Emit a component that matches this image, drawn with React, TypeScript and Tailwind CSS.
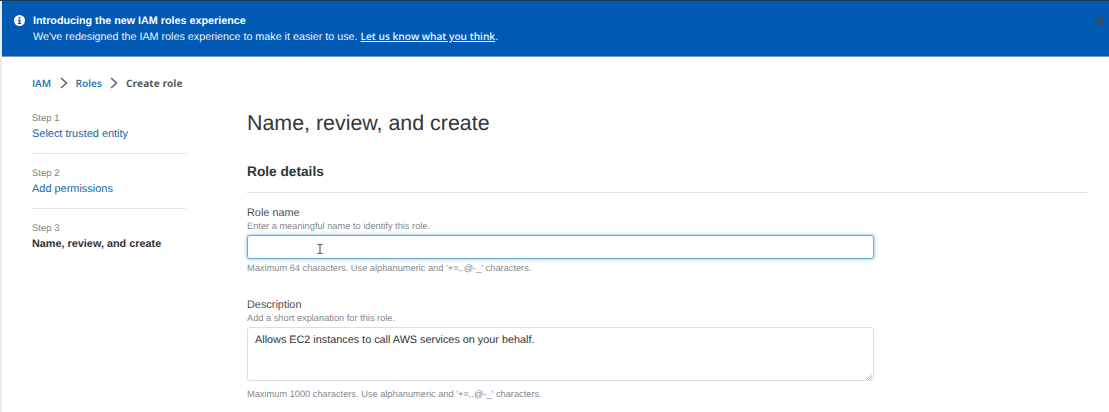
import type { ReactNode } from "react";

function Chevron() {
  return (
    <svg className="h-[12px] w-[8px] shrink-0" viewBox="0 0 8 12" fill="none" stroke="#666b6f" strokeWidth="1.7">
      <path d="M1 1l5.4 5L1 11" />
    </svg>
  );
}

function Step({ n, children, current = false }: { n: number; children: ReactNode; current?: boolean }) {
  return (
    <li className={current ? "h-[55px]" : "mb-[13px] h-[42px] border-b border-[#e6e8e8]"}>
      <div className="h-[13px] text-[9.5px] leading-[14px] text-[#7c8284]">Step {n}</div>
      {current ? (
        <div className="mt-px text-[10.85px] leading-[17px] font-bold text-[#2f3337]">{children}</div>
      ) : (
        <a className="mt-px block text-[10.95px] leading-[17px] text-[#1866a8]">{children}</a>
      )}
    </li>
  );
}

function Label({ title, hint }: { title: string; hint: string }) {
  return (
    <>
      <div className="text-[10.9px] leading-[15px] text-[#4a4e52]">{title}</div>
      <div className="-mt-px text-[9.26px] leading-[12px] text-[#858a8c]">{hint}</div>
    </>
  );
}

export default function App() {
  return (
    <div className="flex h-[412px] w-[1109px] flex-col overflow-hidden bg-white font-['Liberation_Sans',Arial,sans-serif] whitespace-nowrap [text-rendering:geometricPrecision]">
      <div className="h-px shrink-0 bg-[#1d3a5a]" />
      <div className="flex min-h-0 flex-1">
        <div className="w-[2px] shrink-0 bg-[#ececec]" />
        <div className="min-w-0 flex-1">
          <header className="flex h-[56px] border-b border-[#6f9dce] bg-[#0059b3] pt-[12px] pl-[12px] text-white">
            <svg className="mt-[2px] h-[11px] w-[11px]" viewBox="0 0 11 11">
              <circle cx="5.5" cy="5.5" r="5.5" fill="#fff" />
              <path d="M4.7 2h1.7v1.5H4.7zM4 4.4h2.4v3.5h.8V9H3.9V7.9h.8V5.5H4z" fill="#0059b3" />
            </svg>
            <div className="ml-[8px] flex-1 text-[10.76px] leading-[16px]">
              <div className="font-bold">Introducing the new IAM roles experience</div>
              <div className="-mt-px text-[#eaf3fb]">
                We've redesigned the IAM roles experience to make it easier to use.{" "}
                <a className="font-['Open_Sans','Noto_Sans',sans-serif] text-[10.15px] font-semibold underline">Let us know what you think</a>.
              </div>
            </div>
            <svg className="mt-[3px] mr-[5px] h-[9px] w-[9px]" viewBox="0 0 9 9" stroke="#34495c" strokeWidth="2.6">
              <path d="M1 1l7 7M8 1l-7 7" />
            </svg>
          </header>

          <nav className="mt-[18px] ml-[30px] flex h-[16px] items-center font-['Open_Sans','Noto_Sans',sans-serif] text-[10.2px] leading-[16px] font-semibold text-[#1c72ad]">
            <a className="w-[27.5px]">IAM</a>
            <Chevron />
            <a className="ml-[8px] w-[34px]">Roles</a>
            <Chevron />
            <span className="ml-[8.5px] font-bold text-[#565b5f]">Create role</span>
          </nav>

          <div className="ml-[30px] flex">
            <ol className="mt-[21px] w-[154px]">
              <Step n={1}>Select trusted entity</Step>
              <Step n={2}>Add permissions</Step>
              <Step n={3} current>Name, review, and create</Step>
            </ol>

            <main className="ml-[61px] w-[840px] pt-[19px]">
              <h1 className="text-[21.4px] leading-[26px] text-[#33373b]">Name, review, and create</h1>
              <h2 className="mt-[25px] h-[32px] border-b border-[#dfe1e1] text-[13.7px] leading-[21px] font-bold text-[#303438]">Role details</h2>

              <div className="mt-[13px] w-[627px]">
                <Label title="Role name" hint="Enter a meaningful name to identify this role." />
                <div className="mt-[3px] h-[24px] rounded-[3px] border border-[#6fabd6] bg-white pt-[8px] pl-[69px] shadow-[0_0_0_1px_#c3e0f2,0_0_4px_1px_#c5e5f5]">
                  <svg className="h-[10px] w-[6px]" viewBox="0 0 6 10" fill="none" stroke="#44484c" strokeWidth="1">
                    <path d="M.5.5H2L3 1.2 4 .5h1.5M3 1v8M.5 9.5H2l1-.7 1 .7h1.5" />
                  </svg>
                </div>
                <div className="mt-[3px] text-[9.26px] leading-[12px] text-[#858a8c]">Maximum 64 characters. Use alphanumeric and '+=,.@-_' characters.</div>
              </div>

              <div className="mt-[24px] w-[627px]">
                <Label title="Description" hint="Add a short explanation for this role." />
                <div className="mt-[3px] flex h-[54px] items-end rounded-[3px] border border-[#dcdede] bg-white pl-[7px]">
                  <div className="flex-1 self-start pt-[4px] text-[10.84px] leading-[16px] text-[#303438]">
                    Allows EC2 instances to call AWS services on your behalf.
                  </div>
                  <svg className="h-[7px] w-[7px]" viewBox="0 0 7 7" stroke="#c4c4c4" strokeWidth="1">
                    <path d="M0 7l6-6M2 7l4-4M4 7l2-2" />
                  </svg>
                </div>
                <div className="mt-[7px] text-[9.26px] leading-[12px] text-[#858a8c]">Maximum 1000 characters. Use alphanumeric and '+=,.@-_' characters.</div>
              </div>
            </main>
          </div>
        </div>
      </div>
    </div>
  );
}
